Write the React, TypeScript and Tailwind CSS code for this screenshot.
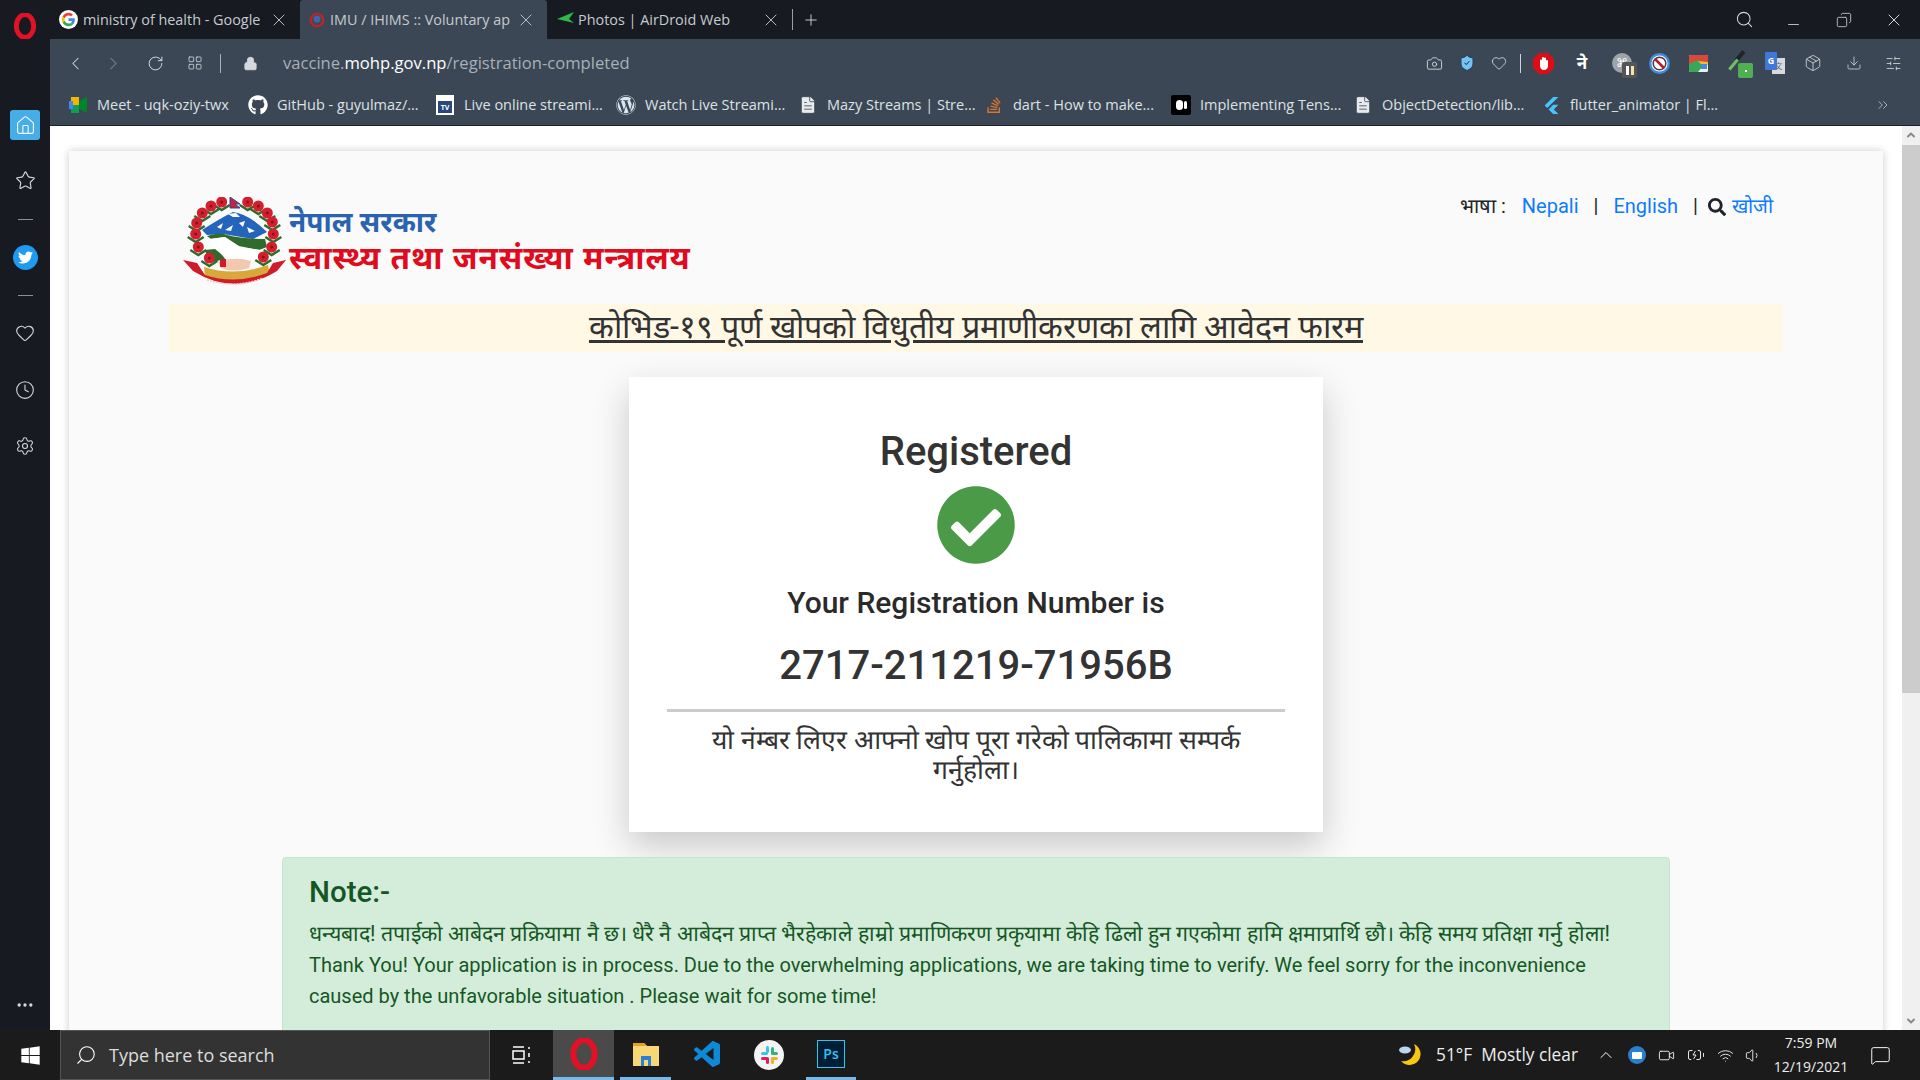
import { Camera, ChevronLeft, ChevronRight, ChevronUp, ChevronsRight, Clock, Download, Heart, Lock, Minus, MessageSquare, Package, Plus, RotateCw, Search, Settings, ShieldCheck, SlidersHorizontal, Star, Volume1, Wifi, X, LayoutGrid, Copy, MoreHorizontal, Home, Video, BatteryCharging, FileText } from 'lucide-react'
import { FaCheckCircle, FaGithub, FaSearch, FaTwitter, FaWindows, FaWordpress, FaStackOverflow } from 'react-icons/fa'
import { SiFlutter } from 'react-icons/si'
import { VscVscode } from 'react-icons/vsc'

const uiFont = "font-['Open_Sans','Noto_Sans',sans-serif]"

function OperaLogo({ size = 24 }: { size?: number }) {
  return (
    <svg width={size} height={size} viewBox="0 0 24 24">
      <ellipse cx="12" cy="12" rx="8" ry="10.500" fill="none" stroke="#e11126" strokeWidth="4.500" />
    </svg>
  )
}

function GoogleIcon() {
  return (
    <svg width="19" height="19" viewBox="0 0 24 24">
      <circle cx="12" cy="12" r="12" fill="#fff" />
      <path d="M20 12.200c0-.6-.1-1.200-.2-1.700H12v3.300h4.500c-.2 1-.8 1.900-1.700 2.500l2.700 2.100c1.600-1.500 2.500-3.600 2.500-6.200z" fill="#4285f4" />
      <path d="M12 20.500c2.300 0 4.200-.8 5.500-2.100l-2.700-2.100c-.7.500-1.700.8-2.800.8-2.200 0-4-1.500-4.700-3.500l-2.800 2.200c1.400 2.800 4.300 4.700 7.500 4.700z" fill="#34a853" />
      <path d="M7.300 13.600c-.4-1-.4-2.200 0-3.200L4.500 8.200c-1.200 2.300-1.200 5.300 0 7.600z" fill="#fbbc05" />
      <path d="M12 6.900c1.200 0 2.300.4 3.200 1.200l2.400-2.400C16.100 4.300 14.200 3.500 12 3.500c-3.200 0-6.100 1.900-7.500 4.700l2.800 2.200C8 8.400 9.800 6.900 12 6.900z" fill="#ea4335" />
    </svg>
  )
}

function Emblem({ className }: { className?: string }) {
  const flowers = [
    [38.7, 5], [64.7, 5], [28, 9], [75.3, 9], [19.3, 16], [84.3, 16], [13.7, 26], [89.3, 25], [12.7, 37], [90.3, 37], [15.3, 50], [88.7, 50], [26.3, 61], [80.3, 60],
  ]
  return (
    <svg viewBox="0 0 106 90" className={className}>
      <path d="M19 33 Q36 22 50 15 Q66 17 84 35 L70 42 L40 37 L24 38 Z" fill="#2464bb" />
      <path d="M45 17 L53 16 L57 20 L50 20 Z M34 30 L40 26 L38 32 Z M56 26 L62 24 L60 30 Z M64 30 L72 34 L66 36 Z M42 33 L50 28 L48 34 Z" fill="#fff" />
      <path d="M24 39 Q36 35 44 38 Q60 42 82 42 L84 50 L76 53 L56 49 L42 40 L28 42 Z" fill="#2f6b2c" />
      <path d="M26 42 L42 40 L56 50 L78 53 L74 64 L34 60 Z" fill="#fff" />
      <path d="M22 53 L32 52 Q40 58 42 62 L26 66 Z" fill="#2f6b2c" />
      <path d="M35 65 Q50 59 68 64 L66 71 Q50 76 38 71 Z" fill="#f3c8ae" />
      <rect x="37" y="62" width="6" height="8" fill="#cf1c2a" />
      <path d="M21 70 Q52 80 85 68 L87 78 Q52 88 22 80 Z" fill="#d8a93a" />
      <path d="M0 63 L14 66 L22 78 Q52 88 84 76 L90 66 L103 63 L94 74 Q52 100 10 74 Z" fill="#cf1c2a" />
      <path d="M24 83 Q52 92 80 81" fill="none" stroke="#f0c9c9" strokeWidth="1.500" strokeDasharray="2 1" />
      {flowers.map(([x, y], i) => (
        <g key={i}>
          <path d={`M${x - 8} ${y + 3} L${x} ${y + 8} L${x + 8} ${y + 3}`} fill="none" stroke="#2f6b2c" strokeWidth="2.500" />
          <circle cx={x} cy={y} r="5.500" fill="#d3202f" />
          <circle cx={x} cy={y} r="1.500" fill="#8e0f1c" />
        </g>
      ))}
      <path d="M47 0 L57 7 L52 7 L57 11 L47 11 Z" fill="#c8233a" stroke="#2a4aa0" />
    </svg>
  )
}

function Tab({ title, active, icon, width, iconBox }: { title: string; active?: boolean; icon: React.ReactNode; width: string; iconBox: string }) {
  return (
    <div className={`flex h-[39px] items-center pl-[9px] pr-[11px] ${width} ${active ? 'rounded-t-[3px] bg-[#3b4754]' : ''}`}>
      <span className={`flex shrink-0 ${iconBox}`}>{icon}</span>
      <span className="min-w-0 flex-1 overflow-hidden text-[14.4px] whitespace-nowrap text-[#c5cad0]">{title}</span>
      <X size={20} strokeWidth={1.1} className="ml-[6px] shrink-0 text-[#c5cad0]" />
    </div>
  )
}

function Bookmark({ title, icon, width }: { title: string; icon: React.ReactNode; width: string }) {
  return (
    <div className={`flex shrink-0 items-center ${width}`}>
      <span className="flex w-[20px] shrink-0 justify-center">{icon}</span>
      <span className="ml-[9px] text-[14.5px] whitespace-nowrap text-[#dde1e5]">{title}</span>
    </div>
  )
}

function Sidebar() {
  return (
    <aside className="flex w-[50px] shrink-0 flex-col items-center bg-[#171b21] pt-[13px] pb-[15px] text-[#d5d9dd]">
      <OperaLogo size={26} />
      <div className="mt-[71px] flex h-[30px] w-[30px] items-center justify-center rounded-[3px] bg-[#46ade6]">
        <Home size={21} strokeWidth={1.2} className="text-white" />
      </div>
      <Star size={21} strokeWidth={1.3} className="mt-[30px]" />
      <div className="mt-[28px] h-px w-[15px] bg-[#8a9097]" />
      <div className="mt-[25px] flex h-[25px] w-[25px] items-center justify-center rounded-full bg-[#1d9bf0]">
        <FaTwitter size={15} className="text-white" />
      </div>
      <div className="mt-[25px] h-px w-[15px] bg-[#8a9097]" />
      <Heart size={20} strokeWidth={1.3} className="mt-[27px]" />
      <Clock size={20} strokeWidth={1.3} className="mt-[37px]" />
      <Settings size={20} strokeWidth={1.3} className="mt-[36px]" />
      <MoreHorizontal size={20} className="mt-auto" />
    </aside>
  )
}

function TabStrip() {
  return (
    <div className={`flex h-[39px] items-center bg-[#171b21] ${uiFont}`}>
      <Tab title="ministry of health - Google" icon={<GoogleIcon />} iconBox="w-[24px]" width="w-[250px]" />
      <Tab
        title="IMU / IHIMS :: Voluntary ap"
        active
        iconBox="w-[21px]"
        width="w-[247px]"
        icon={<svg width="16" height="16" viewBox="0 0 18 18"><circle cx="9" cy="9" r="7" fill="none" stroke="#b3262e" strokeWidth="3" /><circle cx="9" cy="8" r="4" fill="#3b68a8" /></svg>}
      />
      <Tab
        title="Photos | AirDroid Web"
        iconBox="w-[22px]"
        width="w-[245px]"
        icon={<svg width="20" height="16" viewBox="0 0 20 16"><path d="M1 7 L18 0 L13 7 L18 11 Z" fill="#2fb84a" /></svg>}
      />
      <div className="h-[21px] w-px bg-[#9aa0a6]" />
      <Plus size={18} strokeWidth={1.2} className="ml-[9px] text-[#d5d9dd]" />
      <div className="ml-auto flex items-center text-[#d5d9dd]">
        <Search size={19} strokeWidth={1.3} />
        <Minus size={17} strokeWidth={1.2} className="mt-[10px] ml-[31px]" />
        <Copy size={16} strokeWidth={1.2} className="ml-[34px] -scale-x-100" />
        <X size={20} strokeWidth={1.2} className="mr-[16px] ml-[32px]" />
      </div>
    </div>
  )
}

function Toolbar() {
  return (
    <div className={`flex h-[46px] items-center bg-[#3b4754] pt-[2px] text-[#d5d9dd] ${uiFont}`}>
      <ChevronLeft size={21} strokeWidth={1.2} className="ml-[15px]" />
      <ChevronRight size={21} strokeWidth={1.2} className="ml-[17px] text-[#7b8590]" />
      <RotateCw size={17} strokeWidth={1.4} className="ml-[23px]" />
      <LayoutGrid size={16} strokeWidth={1.2} className="ml-[23px]" />
      <div className="ml-[17px] h-[19px] w-px bg-[#aab0b6]" />
      <Lock size={15} fill="#d5d9dd" strokeWidth={1.4} className="ml-[22px]" />
      <div className="ml-[25px] text-[16.6px] text-[#a8b0b8]">
        vaccine.<span className="text-white">mohp.gov.np</span>/registration-completed
      </div>
      <div className="ml-auto flex items-center pr-[18px]">
        <Camera size={17} strokeWidth={1.3} />
        <ShieldCheck size={18} fill="#74c3f2" strokeWidth={1.4} className="ml-[15px] text-[#27425c]" />
        <Heart size={16} strokeWidth={1.3} className="ml-[15px]" />
        <div className="mx-[13px] h-[19px] w-px bg-[#cfd3d7]" />
        <svg width="21" height="21" viewBox="0 0 21 21" className="ml-[-1px]">
          <path d="M6 0h9l6 6v9l-6 6H6l-6-6V6z" fill="#dc0d17" />
          <path d="M7 13V7.500a1 1 0 0 1 2 0V5a1 1 0 0 1 2 0v.500a1 1 0 0 1 2 0V8a1 1 0 0 1 2 0v5c0 2-1.500 4-4 4s-4-2-4-4z" fill="#fff" />
        </svg>
        <span className="ml-[18px] w-[20px] text-center font-['Noto_Sans',sans-serif] text-[17px] leading-[20px] font-bold text-white">ने</span>
        <div className="relative ml-[20px] flex h-[20px] w-[20px] items-center justify-center rounded-full bg-[#9ea4a9] text-[12px] text-white">
          ⌘
          <span className="absolute top-[9px] left-[10px] flex h-[16px] w-[15px] items-center justify-center gap-[2px] rounded-[2px] bg-[#555]">
            <i className="h-[9px] w-[3px] bg-white" />
            <i className="h-[9px] w-[3px] bg-[#f2e6a8]" />
          </span>
        </div>
        <svg width="21" height="21" viewBox="0 0 21 21" className="ml-[17px]">
          <circle cx="10.500" cy="10.500" r="9.300" fill="#fff" stroke="#3f8fdc" strokeWidth="2.400" />
          <circle cx="10.500" cy="10.500" r="6.300" fill="none" stroke="#54323a" strokeWidth="1.500" />
          <path d="M6 6l9 9" stroke="#b01f2d" strokeWidth="2.500" />
        </svg>
        <svg width="19" height="17" viewBox="0 0 19 17" className="ml-[19px]">
          <rect width="19" height="17" rx="1.500" fill="#f0f0f0" />
          <path d="M0 1.500A1.500 1.500 0 0 1 1.500 0h16A1.500 1.500 0 0 1 19 1.500V7L0 9z" fill="#d8483c" />
          <path d="M0 9l9-4 5 6-5 6H1.500A1.500 1.500 0 0 1 0 15.500z" fill="#3aa757" />
          <path d="M9 6l10 1v3H13z" fill="#f2bd2c" />
          <rect x="12" y="9" width="6" height="5" fill="#3a8ee6" />
        </svg>
        <div className="relative ml-[21px] h-[22px] w-[22px]">
          <span className="absolute top-[-2px] left-[9px] h-[12px] w-[4px] rotate-[40deg] bg-[#20242a]" />
          <span className="absolute top-[6px] left-[3px] h-[13px] w-[3px] rotate-[40deg] bg-[#6dc067]" />
          <span className="absolute right-[-2px] bottom-[-4px] flex h-[15px] w-[15px] items-center justify-center rounded-[2px] bg-[#4fb052]">
            <i className="h-[2px] w-[2px] bg-white" />
          </span>
        </div>
        <div className="relative ml-[14px] h-[20px] w-[20px]">
          <span className="absolute top-[5px] left-[7px] flex h-[16px] w-[13px] items-center justify-center bg-[#d7dade] font-['Noto_Sans_CJK_SC',sans-serif] text-[8px] text-[#666]">文</span>
          <span className="absolute top-[-1px] left-0 flex h-[18px] w-[12px] items-center justify-center rounded-[1px] bg-[#3f78d8] text-[9px] font-bold text-white">G</span>
        </div>
        <Package size={18} strokeWidth={1.1} className="ml-[19px]" />
        <Download size={16} strokeWidth={1.2} className="ml-[24px]" />
        <SlidersHorizontal size={17} strokeWidth={1.2} className="ml-[23px]" />
      </div>
    </div>
  )
}

function BookmarkBar() {
  return (
    <div className={`flex h-[41px] items-center border-b border-[#1c2127] bg-[#3b4754] pl-[18px] ${uiFont}`}>
      <Bookmark
        title="Meet - uqk-oziy-twx"
        width="w-[180px]"
        icon={<svg width="18" height="16" viewBox="0 0 18 16"><rect x="2" width="8" height="8" fill="#f4b400" /><rect x="2" y="8" width="8" height="8" fill="#0f9d58" /><rect y="4" width="4" height="8" fill="#4285f4" /><path d="M10 4 L18 0 V16 L10 12 Z" fill="#00832d" /></svg>}
      />
      <Bookmark title="GitHub - guyulmaz/..." width="w-[187px]" icon={<FaGithub size={20} className="text-white" />} />
      <Bookmark
        title="Live online streami..."
        width="w-[181px]"
        icon={<span className="flex h-[20px] w-[18px] items-end justify-center bg-white pb-[2px]"><span className="flex h-[12px] w-[14px] items-center justify-center bg-[#27497d] text-[7px] leading-none font-bold text-white">TV</span></span>}
      />
      <Bookmark title="Watch Live Streami..." width="w-[182px]" icon={<FaWordpress size={20} className="text-[#d8e7f0]" />} />
      <Bookmark title="Mazy Streams | Stre..." width="w-[186px]" icon={<FileText size={20} fill="#e8eaed" strokeWidth={1} className="text-[#3b4754]" />} />
      <Bookmark title="dart - How to make..." width="w-[187px]" icon={<FaStackOverflow size={18} className="text-[#d9752c]" />} />
      <Bookmark title="Implementing Tens..." width="w-[182px]" icon={<span className="flex h-[20px] w-[20px] items-center justify-center gap-[1px] rounded-[2px] bg-black"><i className="h-[10px] w-[7px] rounded-full bg-white" /><i className="h-[8px] w-[3px] rounded-full bg-white" /></span>} />
      <Bookmark title="ObjectDetection/lib..." width="w-[188px]" icon={<FileText size={20} fill="#e8eaed" strokeWidth={1} className="text-[#3b4754]" />} />
      <Bookmark title="flutter_animator | Fl..." width="w-[338px]" icon={<SiFlutter size={17} className="text-[#47c5fb]" />} />
      <ChevronsRight size={16} strokeWidth={1.1} className="ml-[-4px] text-[#d5d9dd]" />
    </div>
  )
}

function PageHeader() {
  return (
    <div className="flex h-[153px] items-start justify-between pl-[14px] pr-[10px]">
      <div className="mt-[46px] flex items-center">
        <Emblem className="h-[90px] w-[106px] shrink-0" />
        <div className="-mt-[7px] font-['Noto_Sans','Liberation_Sans',sans-serif] font-bold">
          <div className="text-[28px] leading-[36px] text-[#2a63b0]">नेपाल सरकार</div>
          <div className="text-[31.5px] leading-[36px] tracking-[1px] text-[#e00b1c]">स्वास्थ्य तथा जनसंख्या मन्त्रालय</div>
        </div>
      </div>
      <div className="mt-[40px] flex items-center font-['Roboto',sans-serif] text-[20px] text-[#212529]">
        <span>भाषा :</span>
        <a className="ml-[16px] text-[#0d7bff]">Nepali</a>
        <span className="ml-[15px]">|</span>
        <a className="ml-[15px] text-[#0d7bff]">English</a>
        <span className="ml-[15px]">|</span>
        <FaSearch size={18} className="ml-[10px] mt-[2px]" />
        <a className="ml-[6px] text-[#0d7bff]">खोजी</a>
      </div>
    </div>
  )
}

function RegisteredCard() {
  return (
    <div className="mx-auto flex h-[455px] w-[694px] flex-col items-center bg-white px-[38px] pt-[52px] font-['Roboto',sans-serif] shadow-[0_14px_34px_rgba(0,0,0,0.2)]">
      <h2 className="text-[40px] leading-[45px] font-medium text-[#333]">Registered</h2>
      <FaCheckCircle size={80} className="mt-[11px] text-[#4a9a48]" />
      <h3 className="mt-[21px] text-[30px] leading-[34px] font-medium text-[#2a2a2a]">Your Registration Number is</h3>
      <div className="mt-[22px] text-[40px] leading-[48px] font-medium text-[#333]">2717-211219-71956B</div>
      <div className="mt-[19px] h-[3px] w-full bg-[#ccc]" />
      <p className="mt-[13px] w-[560px] text-center text-[26.5px] leading-[30px] text-[#333]">
        यो नंम्बर लिएर आफ्नो खोप पूरा गरेको पालिकामा सम्पर्क गर्नुहोला।
      </p>
    </div>
  )
}

function NoteAlert() {
  return (
    <div className="mx-[113px] mt-[25px] h-[260px] rounded-[4px] border border-[#c3e6cb] bg-[#d4edda] px-[26px] pt-[13px] font-['Roboto',sans-serif] text-[#155724]">
      <h4 className="text-[29.5px] leading-[42px] font-medium">Note:-</h4>
      <p className="mt-[5px] text-[20px] leading-[31px]">
        <span className="text-[21.3px]">
          धन्यबाद! तपाईको आबेदन प्रक्रियामा नै छ। धेरै नै आबेदन प्राप्त भैरहेकाले हाम्रो प्रमाणिकरण प्रकृयामा केहि ढिलो हुन गएकोमा हामि क्षमाप्रार्थि छौ। केहि समय प्रतिक्षा गर्नु होला!
        </span>
        <br />
        Thank You! Your application is in process. Due to the overwhelming applications, we are taking time to verify. We feel sorry for the inconvenience caused by the unfavorable situation . Please wait for some time!
      </p>
    </div>
  )
}

function PageBody() {
  return (
    <div className="flex min-h-0 flex-1 bg-white">
      <div className="min-w-0 flex-1 overflow-hidden px-[19px] pt-[25px]">
        <div className="h-[1000px] bg-[#fafafa] px-[100px] shadow-[0_0_8px_rgba(0,0,0,0.2)]">
          <PageHeader />
          <div className="flex h-[48px] items-center justify-center bg-[#fff8e5] pb-[2px] font-['Roboto',sans-serif] text-[32.3px] text-[#333] underline">
            कोभिड-१९ पूर्ण खोपको विधुतीय प्रमाणीकरणका लागि आवेदन फारम
          </div>
          <div className="mt-[25px]">
            <RegisteredCard />
          </div>
          <NoteAlert />
        </div>
      </div>
      <div className="flex w-[18px] shrink-0 flex-col items-center bg-[#f0f0f0]">
        <ChevronUp size={12} strokeWidth={4} className="mt-[3px] text-[#8a8a8a]" />
        <div className="mt-[4px] h-[548px] w-full bg-[#ccc]" />
        <ChevronUp size={12} strokeWidth={4} className="mt-auto mb-[3px] rotate-180 text-[#8a8a8a]" />
      </div>
    </div>
  )
}

function Taskbar() {
  return (
    <div className={`flex h-[50px] shrink-0 items-center bg-[#1b1b1b] text-white ${uiFont}`}>
      <div className="flex w-[60px] justify-center">
        <FaWindows size={21} />
      </div>
      <div className="flex h-full w-[430px] items-center border border-[#555] bg-[#333] pl-[14px]">
        <Search size={22} strokeWidth={1.2} className="-scale-x-100" />
        <span className="ml-[12px] text-[18px] text-[#ddd]">Type here to search</span>
      </div>
      <div className="flex w-[63px] justify-center">
        <svg width="20" height="20" viewBox="0 0 20 20" fill="none" stroke="#fff" strokeWidth="1.500"><path d="M1 2h11M1 18h11M1 6h11v8H1zM17 2v2M17 8v4M17 16v2" /></svg>
      </div>
      <div className="flex h-full w-[61px] items-center justify-center border-b-[3px] border-[#76b9ed] bg-[#4a4a4a]">
        <OperaLogo size={32} />
      </div>
      <div className="ml-[6px] flex h-full w-[51px] items-center justify-center border-b-[3px] border-[#76b9ed]">
        <svg width="28" height="26" viewBox="0 0 28 26"><path d="M1 2h11l3 3h12v20H1z" fill="#f8d775" /><path d="M1 2h11l3 3H1z" fill="#e0a526" /><path d="M9 25V15h10v10h-3v-6h-4v6z" fill="#2a7fd6" /></svg>
      </div>
      <div className="flex h-full w-[73px] items-center justify-center">
        <VscVscode size={32} className="text-[#0f88d8]" />
      </div>
      <div className="flex h-full w-[50px] items-center justify-center">
        <svg width="30" height="30" viewBox="0 0 30 30"><circle cx="15" cy="15" r="15" fill="#f4f4f4" /><rect x="7" y="12" width="7" height="3" rx="1.500" fill="#36c5f0" /><rect x="12" y="6" width="3" height="7" rx="1.500" fill="#36c5f0" /><rect x="17" y="7" width="3" height="7" rx="1.500" fill="#2eb67d" /><rect x="17" y="12" width="7" height="3" rx="1.500" fill="#2eb67d" /><rect x="7" y="17" width="7" height="3" rx="1.500" fill="#e01e5a" /><rect x="12" y="17" width="3" height="7" rx="1.500" fill="#e01e5a" /><rect x="17" y="17" width="7" height="3" rx="1.500" fill="#ecb22e" /><rect x="17" y="17" width="3" height="7" rx="1.500" fill="#ecb22e" /></svg>
      </div>
      <div className="ml-[12px] flex h-full w-[50px] items-center justify-center border-b-[3px] border-[#76b9ed]">
        <span className="flex h-[28px] w-[28px] items-center justify-center border border-[#31c5f0] bg-[#001e36] text-[14px] font-semibold text-[#31c5f0]">Ps</span>
      </div>
      <div className="ml-auto flex h-full items-center">
        <svg width="24" height="24" viewBox="0 0 24 24"><path d="M15 1 A11 11 0 1 1 2 18 A12 12 0 0 0 15 1z" fill="#f9c80e" /><ellipse cx="6" cy="7" rx="6" ry="3.500" fill="#b9d6ee" /></svg>
        <span className="ml-[13px] text-[17.3px] text-[#eee]">51°F&nbsp; Mostly clear</span>
        <ChevronUp size={20} strokeWidth={1.2} className="ml-[18px]" />
        <span className="ml-[12px] flex h-[18px] w-[18px] items-center justify-center rounded-full bg-[#2c7ed0]">
          <i className="h-[7px] w-[10px] rounded-[1px] bg-white" />
        </span>
        <Video size={17} strokeWidth={1.2} className="ml-[12px]" />
        <BatteryCharging size={18} strokeWidth={1.2} className="ml-[12px]" />
        <Wifi size={17} strokeWidth={1.2} className="ml-[12px]" />
        <Volume1 size={17} strokeWidth={1.2} className="ml-[11px]" />
        <div className="ml-[10px] flex w-[78px] flex-col items-center text-[14px] leading-[24px] text-[#eee]">
          <span>7:59 PM</span>
          <span>12/19/2021</span>
        </div>
        <MessageSquare size={21} strokeWidth={1.1} className="mr-[29px] ml-[20px]" />
      </div>
    </div>
  )
}

export default function App() {
  return (
    <div className="flex h-screen w-screen flex-col overflow-hidden">
      <div className="flex min-h-0 flex-1">
        <Sidebar />
        <div className="flex min-w-0 flex-1 flex-col">
          <TabStrip />
          <Toolbar />
          <BookmarkBar />
          <PageBody />
        </div>
      </div>
      <Taskbar />
    </div>
  )
}
